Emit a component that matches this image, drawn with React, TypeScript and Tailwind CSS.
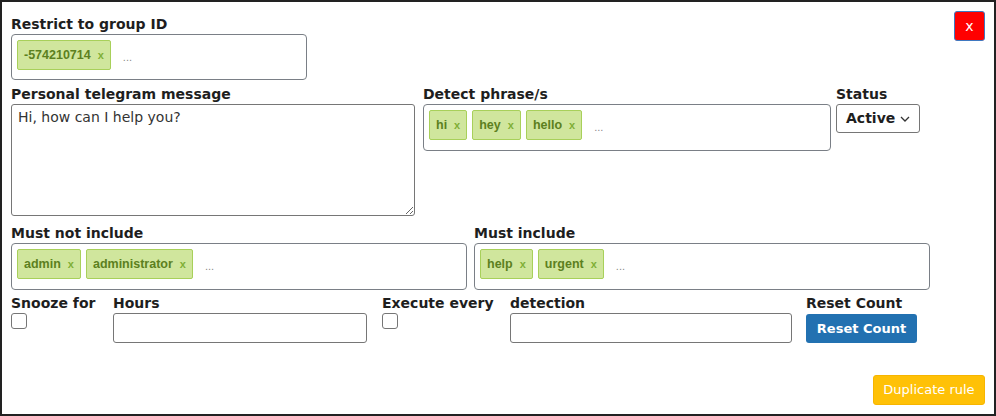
import React from "react";

const Tag = ({ text }: { text: string }) => (
  <span className="inline-flex items-center h-[30px] pl-[6px] pr-[6px] gap-[7px] bg-[#d0e69d] border border-[#a8d05a] rounded-[2px] text-[12.5px] font-bold text-[#5c8020] [font-family:'Liberation_Sans',Arial,sans-serif]">
    <span>{text}</span>
    <span className="text-[#7fae35] text-[11px]">x</span>
  </span>
);

const TagBox = ({ tags, w }: { tags: string[]; w: string }) => (
  <div className={`${w} h-[47px] border border-[#7a7f86] rounded-[4px] p-[5px] flex items-start gap-[5px]`}>
    {tags.map((t) => (
      <Tag key={t} text={t} />
    ))}
    <span className="ml-[7px] mt-[9px] text-[11px] text-[#8a8a8a] [font-family:'Liberation_Sans',Arial,sans-serif]">...</span>
  </div>
);

const Label = ({ children }: { children: React.ReactNode }) => (
  <div className="text-[14px] leading-[19px] font-bold text-[#1e1e1e] whitespace-nowrap">{children}</div>
);

export default function App() {
  return (
    <div className="relative w-[996px] h-[416px] border-2 border-[#222] bg-white pl-[9px] pt-[13px] [font-family:'DejaVu_Sans',Verdana,sans-serif]">
      <button className="absolute top-[9px] right-[9px] w-[31px] h-[30px] bg-[#ff0000] border border-[#3f78c0] rounded-[3px] text-white text-[14px] leading-none flex items-center justify-center">
        x
      </button>

      <Label>Restrict to group ID</Label>
      <div className="w-[296px] h-[46px] border border-[#7a7f86] rounded-[4px] p-[5px] flex items-start gap-[5px]">
        <Tag text="-574210714" />
        <span className="ml-[7px] mt-[9px] text-[11px] text-[#8a8a8a] [font-family:'Liberation_Sans',Arial,sans-serif]">...</span>
      </div>

      <div className="flex mt-[5px]">
        <div className="w-[404px]">
          <Label>Personal telegram message</Label>
          <textarea
            className="block w-[404px] h-[112px] border border-[#767676] rounded-[3px] px-[6px] py-[2px] text-[14px] leading-[20px] text-[#333] resize-y [font-family:'DejaVu_Sans',Verdana,sans-serif]"
            defaultValue="Hi, how can I help you?"
          />
        </div>
        <div className="ml-[8px] w-[408px]">
          <Label>Detect phrase/s</Label>
          <TagBox tags={["hi", "hey", "hello"]} w="w-[408px]" />
        </div>
        <div className="ml-[5px]">
          <Label>Status</Label>
          <div className="w-[84px] h-[29px] border border-[#767676] rounded-[3px] flex items-center pl-[9px] gap-[5px] text-[14px] font-bold text-[#1e1e1e]">
            <span>Active</span>
            <svg width="10" height="6" viewBox="0 0 10 6" fill="none" stroke="#333" strokeWidth="1.3">
              <path d="M1 1l4 4 4-4" />
            </svg>
          </div>
        </div>
      </div>

      <div className="flex mt-[8px]">
        <div>
          <Label>Must not include</Label>
          <TagBox tags={["admin", "administrator"]} w="w-[456px]" />
        </div>
        <div className="ml-[7px]">
          <Label>Must include</Label>
          <TagBox tags={["help", "urgent"]} w="w-[456px]" />
        </div>
      </div>

      <div className="flex mt-[4px]">
        <div className="w-[102px]">
          <Label>Snooze for</Label>
          <div className="w-[16px] h-[16px] border border-[#767676] rounded-[3px]" />
        </div>
        <div className="w-[254px]">
          <Label>Hours</Label>
          <div className="w-[254px] h-[30px] border border-[#767676] rounded-[3px]" />
        </div>
        <div className="ml-[15px] w-[128px]">
          <Label>Execute every</Label>
          <div className="w-[16px] h-[16px] border border-[#767676] rounded-[3px]" />
        </div>
        <div className="w-[282px]">
          <Label>detection</Label>
          <div className="w-[282px] h-[30px] border border-[#767676] rounded-[3px]" />
        </div>
        <div className="ml-[14px]">
          <Label>Reset Count</Label>
          <button className="mt-[1px] w-[111px] h-[29px] bg-[#2271b1] rounded-[3px] text-white text-[13px] font-bold">
            Reset Count
          </button>
        </div>
      </div>

      <div className="absolute right-[9px] bottom-[9px]">
        <button className="w-[112px] h-[30px] bg-[#ffc107] border border-[#f7b500] rounded-[3px] text-white text-[13px]">
          Duplicate rule
        </button>
      </div>
    </div>
  );
}
